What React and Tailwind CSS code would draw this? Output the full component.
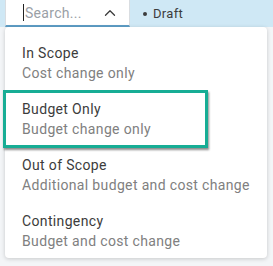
import { ChevronUp } from "lucide-react";

const options = [
  { title: "In Scope", desc: "Cost change only" },
  { title: "Budget Only", desc: "Budget change only" },
  { title: "Out of Scope", desc: "Additional budget and cost change" },
  { title: "Contingency", desc: "Budget and cost change" },
];

export default function App() {
  return (
    <div
      className="relative w-[273px] h-[266px] overflow-hidden bg-[#f3f5f7]"
      style={{ fontFamily: 'Roboto, "Noto Sans", sans-serif' }}
    >
      {/* top row */}
      <div className="flex h-[27px] bg-[#cfe8f5]">
        <div className="ml-[5px] w-[125px] h-[27px] bg-white border-l border-r border-[#d9dde1] border-b-2 border-b-[#5e9ec6] flex items-center pl-[17px] pr-[10px]">
          <span className="w-px h-[17px] bg-[#222]" />
          <span className="flex-1 text-[14px] text-[#9aa0a6] leading-none pl-[1px] tracking-[0.3px]">Search...</span>
          <ChevronUp size={18} strokeWidth={1.75} className="text-[#3c3c3c]" />
        </div>
        <div className="flex items-center pl-[13px] gap-[6px] text-[13px] text-[#3c3c3c] tracking-[0.3px]">
          <span className="w-[4px] h-[4px] rounded-full bg-[#3c3c3c]" />
          <span>Draft</span>
        </div>
      </div>

      {/* dropdown panel */}
      <div className="absolute left-[5px] top-[27px] w-[262px] h-[231px] bg-white rounded-[4px] shadow-[0_1px_4px_rgba(0,0,0,0.18)] py-[8px]">
        {options.map((o) => (
          <div key={o.title} className="h-[56px] pl-[17px] pr-[4px] py-[8px] flex flex-col justify-center whitespace-nowrap tracking-[0.35px]">
            <div className="text-[14px] leading-[20px] text-[#3c3c3c]">{o.title}</div>
            <div className="text-[14px] leading-[20px] text-[#808080]">{o.desc}</div>
          </div>
        ))}
      </div>

      {/* highlight annotation */}
      <div className="absolute left-[3px] top-[90px] w-[205px] h-[58px] border-[3px] border-[#17ad95] shadow-[1px_2px_2px_rgba(0,0,0,0.45)]" />
    </div>
  );
}
